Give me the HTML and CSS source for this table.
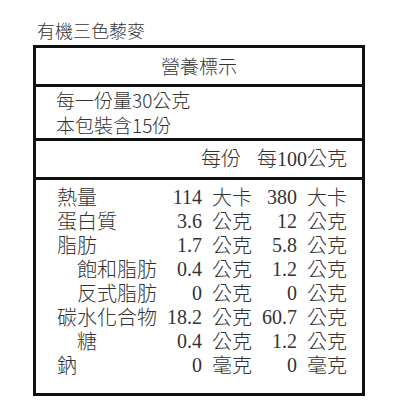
FILE: index.html
```html
<!DOCTYPE html>
<html lang="zh-Hant">
<head>
<meta charset="utf-8">
<link rel="stylesheet" href="styles.css">
</head>
<body>
<div class="product">有機三色藜麥</div>
<div class="label">
  <div class="sec title">營養標示</div>
  <div class="sec serving">
    <div>每一份量30公克</div>
    <div>本包裝含15份</div>
  </div>
  <div class="sec head">
    <span>每份</span>
    <span>每100公克</span>
  </div>
  <div class="sec data">
    <div class="row"><span class="name">熱量</span><span class="num">114</span><span class="unit">大卡</span><span class="num">380</span><span class="unit">大卡</span></div>
    <div class="row"><span class="name">蛋白質</span><span class="num">3.6</span><span class="unit">公克</span><span class="num">12</span><span class="unit">公克</span></div>
    <div class="row"><span class="name">脂肪</span><span class="num">1.7</span><span class="unit">公克</span><span class="num">5.8</span><span class="unit">公克</span></div>
    <div class="row"><span class="name sub">飽和脂肪</span><span class="num">0.4</span><span class="unit">公克</span><span class="num">1.2</span><span class="unit">公克</span></div>
    <div class="row"><span class="name sub">反式脂肪</span><span class="num">0</span><span class="unit">公克</span><span class="num">0</span><span class="unit">公克</span></div>
    <div class="row"><span class="name">碳水化合物</span><span class="num">18.2</span><span class="unit">公克</span><span class="num">60.7</span><span class="unit">公克</span></div>
    <div class="row"><span class="name sub">糖</span><span class="num">0.4</span><span class="unit">公克</span><span class="num">1.2</span><span class="unit">公克</span></div>
    <div class="row"><span class="name">鈉</span><span class="num">0</span><span class="unit">毫克</span><span class="num">0</span><span class="unit">毫克</span></div>
  </div>
</div>
</body>
</html>
```
FILE: styles.css
```css
html, body {
  margin: 0;
  padding: 0;
  background: #ffffff;
}
body {
  padding-top: 18px;
  color: #333333;
  font-family: "Noto Sans CJK TC", "Noto Sans CJK SC", sans-serif;
  font-weight: 300;
}
.product {
  padding-left: 37px;
  font-size: 18px;
  line-height: 25px;
  margin-bottom: 2px;
  white-space: nowrap;
}
.label {
  margin-left: 33px;
  width: 332px;
  box-sizing: border-box;
  border: 3px solid #111111;
}
.sec {
  border-bottom: 3px solid #111111;
}
.sec:last-child {
  border-bottom: none;
}
.title {
  height: 36px;
  line-height: 35px;
  text-align: center;
  font-size: 19px;
}
.serving {
  height: 54px;
  box-sizing: border-box;
  padding-left: 20px;
  font-size: 19px;
  line-height: 25px;
}
.head {
  height: 36px;
  line-height: 36px;
  display: flex;
  justify-content: flex-end;
  gap: 16px;
  padding-right: 15px;
  font-family: "Liberation Serif", "Noto Sans CJK TC", serif;
  font-size: 20px;
}
.data {
  height: 213px;
  box-sizing: border-box;
  padding: 5px 15px 0 21px;
  font-family: "Liberation Serif", "Noto Sans CJK TC", serif;
  font-size: 20px;
}
.row {
  display: grid;
  grid-template-columns: 1fr 45px 50px 45px 50px;
  height: 24px;
  line-height: 24px;
  white-space: nowrap;
}
.name {
  font-family: "Noto Sans CJK TC", sans-serif;
}
.sub {
  padding-left: 20px;
}
.num {
  text-align: right;
  font-weight: 400;
}
.unit {
  padding-left: 10px;
  font-family: "Noto Sans CJK TC", sans-serif;
}
```
